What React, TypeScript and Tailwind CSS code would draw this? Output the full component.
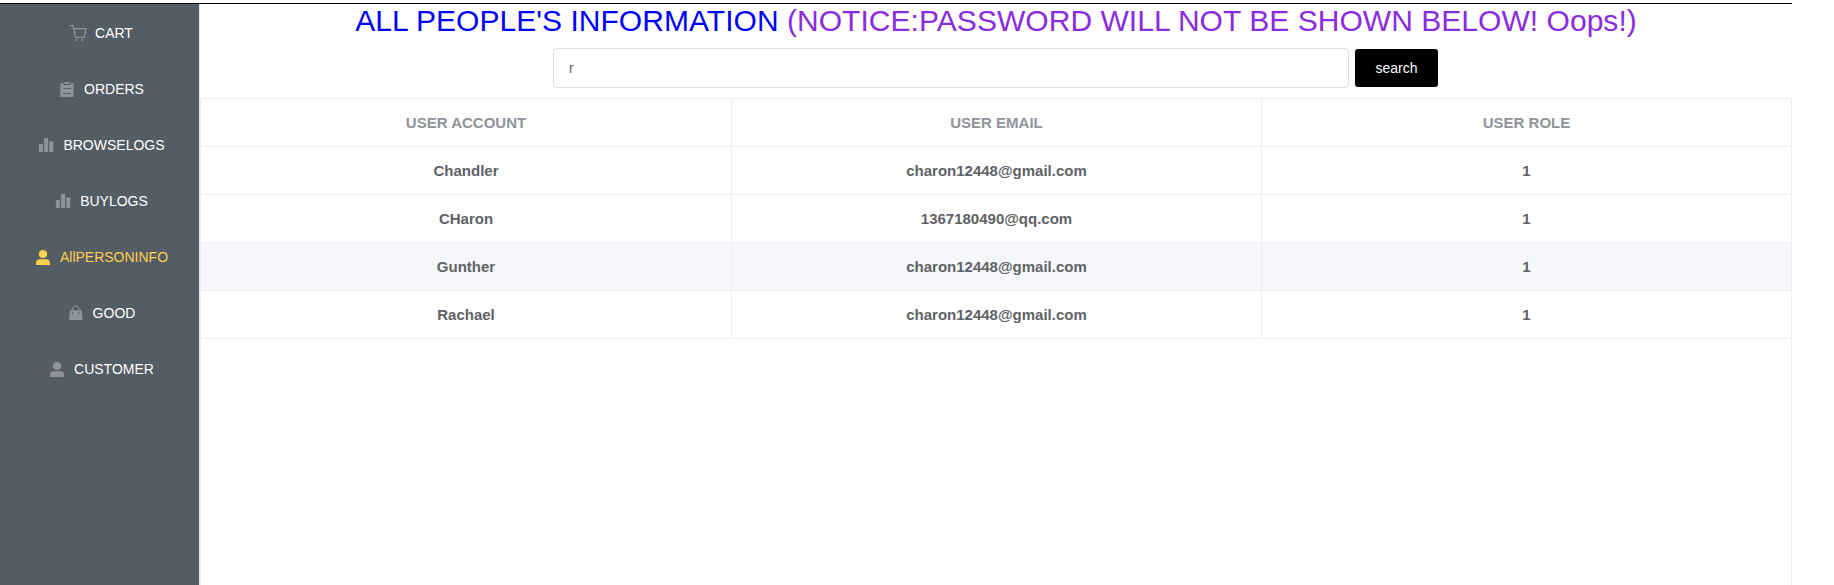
import React from 'react';

const icons = {
  cart: (
    <g fill="none" stroke="currentColor" strokeWidth="1.3">
      <path d="M1 1.6h3.2l2.3 11.8h8.8" />
      <path d="M4.8 4.6h12L15.4 13.4" />
      <circle cx="7.4" cy="16" r="1.1" fill="currentColor" stroke="none" />
      <circle cx="13.4" cy="16" r="1.1" fill="currentColor" stroke="none" />
    </g>
  ),
  order: (
    <path
      fill="currentColor"
      fillRule="evenodd"
      d="M2.4 3h3v2h7.2V3h3v14H2.4zM6.6 2h4.8v2H6.6zM5 8v1h8V8zM5 13v1h8v-1z"
    />
  ),
  bars: <path fill="currentColor" d="M1.9 8h4v8h-4zM7.1 2h4v14h-4zM12.3 5.6h4V16h-4z" />,
  user: (
    <g fill="currentColor">
      <circle cx="9" cy="6" r="4.1" />
      <path d="M2 17v-2a3.8 3.8 0 0 1 3.8-3.8h6.4A3.8 3.8 0 0 1 16 15v2z" />
    </g>
  ),
  bag: (
    <g>
      <path d="M5.7 6.2V5a3 3 0 0 1 6 0v1.2" fill="none" stroke="currentColor" strokeWidth="1.1" />
      <path
        fill="currentColor"
        fillRule="evenodd"
        d="M2.9 6.2h11.8l.8 9.9H2zM5.2 8v2h1V8zM11.2 8v2h1V8z"
      />
    </g>
  ),
};

type MenuItem = { label: string; icon: keyof typeof icons; active?: boolean };

const menu: MenuItem[] = [
  { label: 'CART', icon: 'cart' },
  { label: 'ORDERS', icon: 'order' },
  { label: 'BROWSELOGS', icon: 'bars' },
  { label: 'BUYLOGS', icon: 'bars' },
  { label: 'AllPERSONINFO', icon: 'user', active: true },
  { label: 'GOOD', icon: 'bag' },
  { label: 'CUSTOMER', icon: 'user' },
];

const users = [
  { account: 'Chandler', email: 'charon12448@gmail.com', role: 1 },
  { account: 'CHaron', email: '1367180490@qq.com', role: 1 },
  { account: 'Gunther', email: 'charon12448@gmail.com', role: 1, hover: true },
  { account: 'Rachael', email: 'charon12448@gmail.com', role: 1 },
];

const cell = 'h-12 border-r border-b border-[#ebeef5] p-0 pt-0.5 text-center align-middle font-bold';

export default function App() {
  return (
    <div className="h-[585px] overflow-hidden bg-white pt-[3px] font-['Liberation_Sans',Arial,sans-serif]">
      <div className="flex h-full w-[1792px] border-t border-black">
        <aside className="w-[200px] shrink-0 border-r border-[#e6e6e6] bg-[#545c64]">
          <ul>
            {menu.map((item) => (
              <li
                key={item.label}
                className={`flex h-14 items-center justify-center gap-[5px] text-sm ${item.active ? 'text-[#ffd04b]' : 'text-white'}`}
              >
                <span className={`flex w-6 justify-center pt-0.5 ${item.active ? '' : 'text-[#909399]'}`}>
                  <svg className="size-[18px]" viewBox="0 0 18 18">{icons[item.icon]}</svg>
                </span>
                <span className="pt-px">{item.label}</span>
              </li>
            ))}
          </ul>
        </aside>
        <main className="flex min-w-0 flex-1 flex-col">
          <h1 className="text-center text-[30px] leading-[34px] tracking-[0.04px] whitespace-nowrap text-[#0000ff]">
            ALL PEOPLE'S INFORMATION{' '}
            <span className="text-[#8a2be2]">(NOTICE:PASSWORD WILL NOT BE SHOWN BELOW! Oops!)</span>
          </h1>
          <div className="mt-2.5 flex h-[50px] items-start justify-center gap-1.5 pr-px">
            <input
              defaultValue="r"
              className="h-10 w-[796px] rounded border border-[#dcdfe6] bg-white px-[15px] text-sm text-[#606266] outline-none"
            />
            <button className="mt-px h-[38px] w-[83px] rounded-[3px] bg-black text-sm text-white">search</button>
          </div>
          <div className="flex-1 border-t border-r border-l border-[#ebeef5]">
            <table className="-mr-px w-[1591px] table-fixed border-separate border-spacing-0 text-[15px]">
              <colgroup>
                <col className="w-[531px]" />
                <col className="w-[530px]" />
                <col className="w-[530px]" />
              </colgroup>
              <thead className="text-[#909399]">
                <tr>
                  <th className={cell}>USER ACCOUNT</th>
                  <th className={cell}>USER EMAIL</th>
                  <th className={cell}>USER ROLE</th>
                </tr>
              </thead>
              <tbody className="text-[#606266]">
                {users.map((u) => (
                  <tr key={u.account} className={u.hover ? 'bg-[#f5f7fa]' : 'bg-white'}>
                    <td className={cell}>{u.account}</td>
                    <td className={cell}>{u.email}</td>
                    <td className={cell}>{u.role}</td>
                  </tr>
                ))}
              </tbody>
            </table>
          </div>
        </main>
      </div>
    </div>
  );
}
